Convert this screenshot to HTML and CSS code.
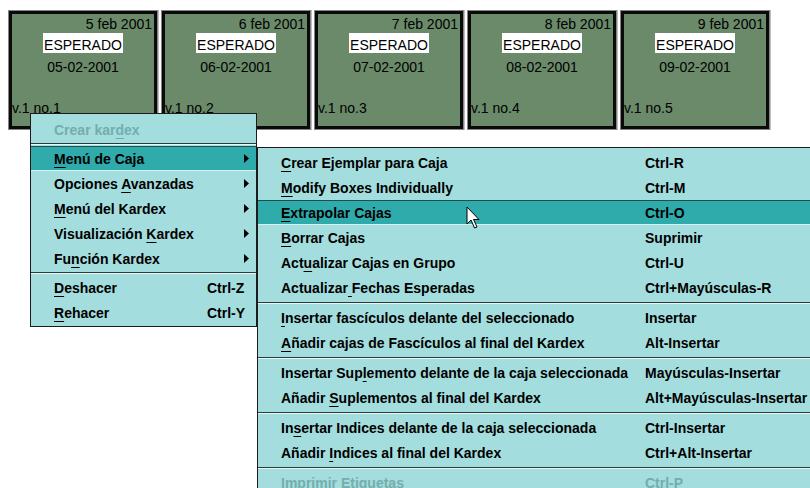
FILE: index.html
```html
<!DOCTYPE html>
<html lang="es">
<head>
  <meta charset="UTF-8">
  <title>Kardex</title>
  <link rel="stylesheet" href="styles.css">
</head>
<body>

<div class="kardex">
  <div class="caja">
    <div class="caja-cara">
      <div class="caja-fecha">5 feb 2001</div>
      <div class="caja-estado"><span>ESPERADO</span></div>
      <div class="caja-esperada">05-02-2001</div>
      <div class="caja-numero">v.1 no.1</div>
    </div>
  </div>
  <div class="caja">
    <div class="caja-cara">
      <div class="caja-fecha">6 feb 2001</div>
      <div class="caja-estado"><span>ESPERADO</span></div>
      <div class="caja-esperada">06-02-2001</div>
      <div class="caja-numero">v.1 no.2</div>
    </div>
  </div>
  <div class="caja">
    <div class="caja-cara">
      <div class="caja-fecha">7 feb 2001</div>
      <div class="caja-estado"><span>ESPERADO</span></div>
      <div class="caja-esperada">07-02-2001</div>
      <div class="caja-numero">v.1 no.3</div>
    </div>
  </div>
  <div class="caja">
    <div class="caja-cara">
      <div class="caja-fecha">8 feb 2001</div>
      <div class="caja-estado"><span>ESPERADO</span></div>
      <div class="caja-esperada">08-02-2001</div>
      <div class="caja-numero">v.1 no.4</div>
    </div>
  </div>
  <div class="caja">
    <div class="caja-cara">
      <div class="caja-fecha">9 feb 2001</div>
      <div class="caja-estado"><span>ESPERADO</span></div>
      <div class="caja-esperada">09-02-2001</div>
      <div class="caja-numero">v.1 no.5</div>
    </div>
  </div>
</div>

<!-- menu contextual -->
<div class="menu menu-principal">
  <div class="item deshabilitado"><span>Crear kar<u>d</u>ex</span></div>
  <div class="separador"></div>
  <div class="item activo"><span><u>M</u>enú de Caja</span><span></span><svg class="flecha" width="5" height="9"><polygon points="0,0 5,4.5 0,9"/></svg></div>
  <div class="item"><span>Opciones <u>A</u>vanzadas</span><span></span><svg class="flecha" width="5" height="9"><polygon points="0,0 5,4.5 0,9"/></svg></div>
  <div class="item"><span><u>M</u>enú del Kardex</span><span></span><svg class="flecha" width="5" height="9"><polygon points="0,0 5,4.5 0,9"/></svg></div>
  <div class="item"><span>Visualización <u>K</u>ardex</span><span></span><svg class="flecha" width="5" height="9"><polygon points="0,0 5,4.5 0,9"/></svg></div>
  <div class="item"><span>Fu<u>n</u>ción Kardex</span><span></span><svg class="flecha" width="5" height="9"><polygon points="0,0 5,4.5 0,9"/></svg></div>
  <div class="separador"></div>
  <div class="item"><span><u>D</u>eshacer</span><span class="atajo">Ctrl-Z</span></div>
  <div class="item"><span><u>R</u>ehacer</span><span class="atajo">Ctrl-Y</span></div>
</div>

<div class="menu submenu">
  <div class="item"><span><u>C</u>rear Ejemplar para Caja</span><span>Ctrl-R</span></div>
  <div class="item"><span><u>M</u>odify Boxes Individually</span><span>Ctrl-M</span></div>
  <div class="item activo"><span><u>E</u>xtrapolar Cajas</span><span>Ctrl-O</span></div>
  <div class="item"><span><u>B</u>orrar Cajas</span><span>Suprimir</span></div>
  <div class="item"><span>Act<u>u</u>alizar Cajas en Grupo</span><span>Ctrl-U</span></div>
  <div class="item"><span>Actualizar<u> </u>Fechas Esperadas</span><span>Ctrl+Mayúsculas-R</span></div>
  <div class="separador"></div>
  <div class="item"><span><u>I</u>nsertar fascículos delante del seleccionado</span><span>Insertar</span></div>
  <div class="item"><span><u>A</u>ñadir cajas de Fascículos al final del Kardex</span><span>Alt-Insertar</span></div>
  <div class="separador"></div>
  <div class="item"><span>Insertar Sup<u>l</u>emento delante de la caja seleccionada</span><span>Mayúsculas-Insertar</span></div>
  <div class="item"><span>Añadir <u>S</u>uplementos al final del Kardex</span><span>Alt+Mayúsculas-Insertar</span></div>
  <div class="separador"></div>
  <div class="item"><span>In<u>s</u>ertar Indices delante de la caja seleccionada</span><span>Ctrl-Insertar</span></div>
  <div class="item"><span>Añadir <u>I</u>ndices al final del Kardex</span><span>Ctrl+Alt-Insertar</span></div>
  <div class="separador"></div>
  <div class="item deshabilitado"><span>Imprimir Etiquetas</span><span>Ctrl-P</span></div>
</div>

<svg class="cursor" width="15" height="24">
  <path d="M1 1 V18 L5 14 L8.5 22 L11 21 L7.5 13.5 H13 Z" fill="#fff" stroke="#000" stroke-width="1"/>
</svg>

</body>
</html>
```

FILE: styles.css
```css
html, body {
  margin: 0;
  padding: 0;
}

body {
  position: relative;
  width: 810px;
  height: 488px;
  overflow: hidden;
  background-color: #ffffff;
  font-family: "Liberation Sans", Arial, sans-serif;
  color: #000;
}

.kardex {
  display: flex;
  gap: 3px;
  padding: 10px 0 0 8px;
}

.caja {
  width: 150px;
  height: 120px;
  box-sizing: border-box;
  border: 1px solid #858585;
  box-shadow: 1px 0 0 #bdbdbd;
}

.caja-cara {
  height: 100%;
  box-sizing: border-box;
  border: 3px solid #0a0a0a;
  background-color: #6a8a6a;
  display: flex;
  flex-direction: column;
  padding: 2px 2px 10px 2px;
  font-size: 14px;
  line-height: 16px;
}

.caja-fecha {
  text-align: right;
}

.caja-estado {
  margin-top: 1px;
  text-align: center;
}

.caja-estado span {
  display: inline-block;
  background-color: #ffffff;
  padding: 4px 1px 0;
  line-height: 16px;
}

.caja-esperada {
  margin-top: 6px;
  text-align: center;
}

.caja-numero {
  margin-top: auto;
  margin-left: -2px;
}

/* menus */
.menu {
  position: absolute;
  box-sizing: border-box;
  background-color: #a3dddd;
  border: 1px solid #1c1c1c;
  font-size: 14px;
  font-weight: bold;
  white-space: nowrap;
}

.menu-principal {
  left: 30px;
  top: 113px;
  width: 227px;
  padding: 3px 0 1px;
}

.submenu {
  left: 257px;
  top: 147px;
  width: 600px;
  padding-top: 2px;
}

.item {
  display: grid;
  height: 25px;
  align-items: center;
  padding-left: 23px;
}

.menu-principal .item {
  grid-template-columns: 153px 1fr 5px;
  padding-right: 7px;
}

.submenu .item {
  grid-template-columns: 364px 1fr;
}

.item.activo {
  background-color: #2fabab;
  box-shadow: inset 0 1px 0 #1f4f4f, inset 0 -1px 0 #d4f2f2;
}

.deshabilitado {
  color: #74adad;
}

.separador {
  border-top: 1px solid #2b3b3b;
  border-bottom: 1px solid #e6f7f7;
  margin: 1px 0;
}

.submenu .separador {
  margin: 2px 0 1px;
}

.flecha {
  fill: #000;
}

u {
  text-decoration-thickness: 1px;
  text-underline-offset: 3px;
}

.cursor {
  position: absolute;
  left: 466px;
  top: 206px;
}
```
